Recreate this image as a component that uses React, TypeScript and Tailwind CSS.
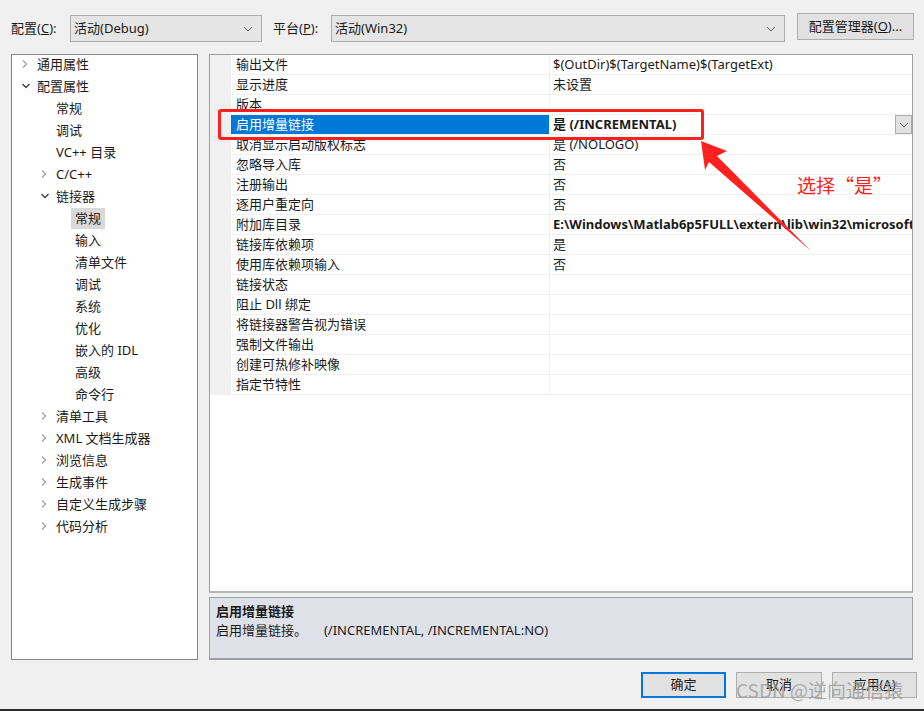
import React from "react";

const FONT = { fontFamily: '"Segoe UI", "Noto Sans", "Noto Sans CJK SC", sans-serif' };

type TreeItem = { label: string; level: number; arrow?: "right" | "down"; selected?: boolean };

const tree: TreeItem[] = [
  { label: "通用属性", level: 0, arrow: "right" },
  { label: "配置属性", level: 0, arrow: "down" },
  { label: "常规", level: 1 },
  { label: "调试", level: 1 },
  { label: "VC++ 目录", level: 1 },
  { label: "C/C++", level: 1, arrow: "right" },
  { label: "链接器", level: 1, arrow: "down" },
  { label: "常规", level: 2, selected: true },
  { label: "输入", level: 2 },
  { label: "清单文件", level: 2 },
  { label: "调试", level: 2 },
  { label: "系统", level: 2 },
  { label: "优化", level: 2 },
  { label: "嵌入的 IDL", level: 2 },
  { label: "高级", level: 2 },
  { label: "命令行", level: 2 },
  { label: "清单工具", level: 1, arrow: "right" },
  { label: "XML 文档生成器", level: 1, arrow: "right" },
  { label: "浏览信息", level: 1, arrow: "right" },
  { label: "生成事件", level: 1, arrow: "right" },
  { label: "自定义生成步骤", level: 1, arrow: "right" },
  { label: "代码分析", level: 1, arrow: "right" },
];

const props: { name: string; value: string; bold?: boolean; selected?: boolean }[] = [
  { name: "输出文件", value: "$(OutDir)$(TargetName)$(TargetExt)" },
  { name: "显示进度", value: "未设置" },
  { name: "版本", value: "" },
  { name: "启用增量链接", value: "是 (/INCREMENTAL)", bold: true, selected: true },
  { name: "取消显示启动版权标志", value: "是 (/NOLOGO)" },
  { name: "忽略导入库", value: "否" },
  { name: "注册输出", value: "否" },
  { name: "逐用户重定向", value: "否" },
  { name: "附加库目录", value: "E:\\Windows\\Matlab6p5FULL\\extern\\lib\\win32\\microsoft", bold: true },
  { name: "链接库依赖项", value: "是" },
  { name: "使用库依赖项输入", value: "否" },
  { name: "链接状态", value: "" },
  { name: "阻止 Dll 绑定", value: "" },
  { name: "将链接器警告视为错误", value: "" },
  { name: "强制文件输出", value: "" },
  { name: "创建可热修补映像", value: "" },
  { name: "指定节特性", value: "" },
];

function Chevron({ dir }: { dir: "right" | "down" }) {
  return dir === "right" ? (
    <svg width="8" height="10" viewBox="0 0 8 10">
      <path d="M2 1.5 L5.5 5 L2 8.5" fill="none" stroke="#a6a6a6" strokeWidth="1.4" />
    </svg>
  ) : (
    <svg width="10" height="8" viewBox="0 0 10 8">
      <path d="M1.5 2 L5 5.5 L8.5 2" fill="none" stroke="#404040" strokeWidth="1.4" />
    </svg>
  );
}

function ComboArrow() {
  return (
    <svg width="10" height="6" viewBox="0 0 10 6">
      <path d="M1 1 L5 5 L9 1" fill="none" stroke="#606060" strokeWidth="1" />
    </svg>
  );
}

function Combo({ text, width }: { text: string; width: string }) {
  return (
    <div className={`${width} h-[27px] bg-[#e5e5e5] border border-[#adadad] flex items-center justify-between pl-[3px] pr-[8px]`}>
      <span className="text-[13px] text-[#1a1a1a]">{text}</span>
      <ComboArrow />
    </div>
  );
}

export default function App() {
  return (
    <div className="relative w-[924px] h-[711px] bg-[#f0f0f0] flex flex-col text-[#1a1a1a] overflow-hidden" style={FONT}>
      {/* top bar */}
      <div className="h-[54px] flex items-start pt-[15px] pl-[11px]">
        <span className="text-[13px] mt-[4px] w-[59px]">
          配置(<span className="underline">C</span>):
        </span>
        <Combo text="活动(Debug)" width="w-[192px]" />
        <span className="text-[13px] mt-[4px] ml-[11px] w-[58px]">
          平台(<span className="underline">P</span>):
        </span>
        <Combo text="活动(Win32)" width="w-[454px]" />
        <div className="ml-[12px] -mt-[2px] w-[117px] h-[27px] bg-[#e1e1e1] border border-[#adadad] flex items-center justify-center text-[13px]">
          配置管理器(<span className="underline">O</span>)...
        </div>
      </div>

      {/* main */}
      <div className="flex pl-[11px] h-[606px]">
        {/* tree */}
        <div className="w-[187px] h-[606px] bg-white border border-[#828790] overflow-hidden">
          <div className="-mt-[2px]">
            {tree.map((t, i) => {
              const pad = t.level === 0 ? "pl-[25px]" : t.level === 1 ? "pl-[44px]" : "pl-[63px]";
              const arrowPos = t.level === 0 ? "left-[9px]" : "left-[28px]";
              return (
                <div key={i} className={`relative h-[22px] flex items-center ${pad}`}>
                  {t.arrow && (
                    <span className={`absolute ${arrowPos} top-0 h-[22px] flex items-center`}>
                      <Chevron dir={t.arrow} />
                    </span>
                  )}
                  <span className={`text-[13px] leading-[21px] ${t.selected ? "bg-[#d9d9d9] -ml-[4px] px-[4px]" : ""}`}>
                    {t.label}
                  </span>
                </div>
              );
            })}
          </div>
        </div>

        {/* right column */}
        <div className="ml-[11px] w-[704px] flex flex-col">
          <div className="h-[539px] bg-white border border-[#a0a0a0] border-b-[2px] border-b-[#b4b4b4]">
            {props.map((p, i) => (
              <div key={i} className="flex h-[20px]">
                <div className="w-[21px] bg-[#f0f0f0]" />
                <div
                  className={`w-[318px] border-b border-[#f0f0f0] pl-[5px] text-[13px] leading-[19px] whitespace-nowrap ${
                    p.selected ? "bg-[#0078d7] text-white" : ""
                  }`}
                >
                  {p.name}
                </div>
                <div className="w-px bg-[#f0f0f0]" />
                <div className="flex-1 relative border-b border-[#f0f0f0] pl-[3px] text-[13px] leading-[19px] whitespace-nowrap overflow-hidden">
                  <span className={p.bold ? "font-bold" : ""}>{p.value}</span>
                  {p.selected && (
                    <div className="absolute right-0 top-0 w-[17px] h-[19px] bg-[#e1e1e1] border border-[#adadad] flex items-center justify-center">
                      <ComboArrow />
                    </div>
                  )}
                </div>
              </div>
            ))}
          </div>
          <div className="mt-[4px] h-[63px] bg-[#dfe1e8] border border-[#a0a0a0] border-b-[2px] border-b-[#a0a0a0] px-[6px] pt-[4px]">
            <div className="text-[13px] font-bold leading-[18px]">启用增量链接</div>
            <div className="text-[13px] leading-[20px] whitespace-pre">
              启用增量链接。     (/INCREMENTAL, /INCREMENTAL:NO)
            </div>
          </div>
        </div>
      </div>

      {/* buttons */}
      <div className="flex justify-end gap-[10px] pr-[7px] pt-[12px]">
        <div className="w-[85px] h-[26px] bg-[#e1e1e1] border-2 border-[#0078d7] flex items-center justify-center text-[13px]">
          确定
        </div>
        <div className="w-[86px] h-[26px] bg-[#e1e1e1] border border-[#adadad] flex items-center justify-center text-[13px]">
          取消
        </div>
        <div className="w-[85px] h-[26px] bg-[#e1e1e1] border border-[#adadad] flex items-center justify-center text-[13px]">
          应用(<span className="underline">A</span>)
        </div>
      </div>
      <div className="absolute left-0 right-0 bottom-0 h-[2px] bg-[#2b2b2b]" />

      {/* annotation */}
      <div className="absolute left-[218px] top-[109px] w-[486px] h-[31px] border-[3px] border-[#ff1f1f] rounded-[3px]" />
      <svg className="absolute left-0 top-0 pointer-events-none" width="924" height="711">
        <polygon points="701,141 727,151 717,156 811,251 709,162 705,170" fill="#ff2020" />
      </svg>
      <div className="absolute left-[797px] top-[171px] text-[19px] text-[#ff2020]" style={{ fontFamily: '"Noto Sans CJK SC", sans-serif' }}>
        选择“是”
      </div>

      {/* watermark */}
      <div
        className="absolute left-[736px] top-[676px] text-[19px] text-[#9a9a9a]/80"
        style={{ fontFamily: '"Noto Sans CJK SC", sans-serif' }}
      >
        CSDN @逆向通信猿
      </div>
    </div>
  );
}
